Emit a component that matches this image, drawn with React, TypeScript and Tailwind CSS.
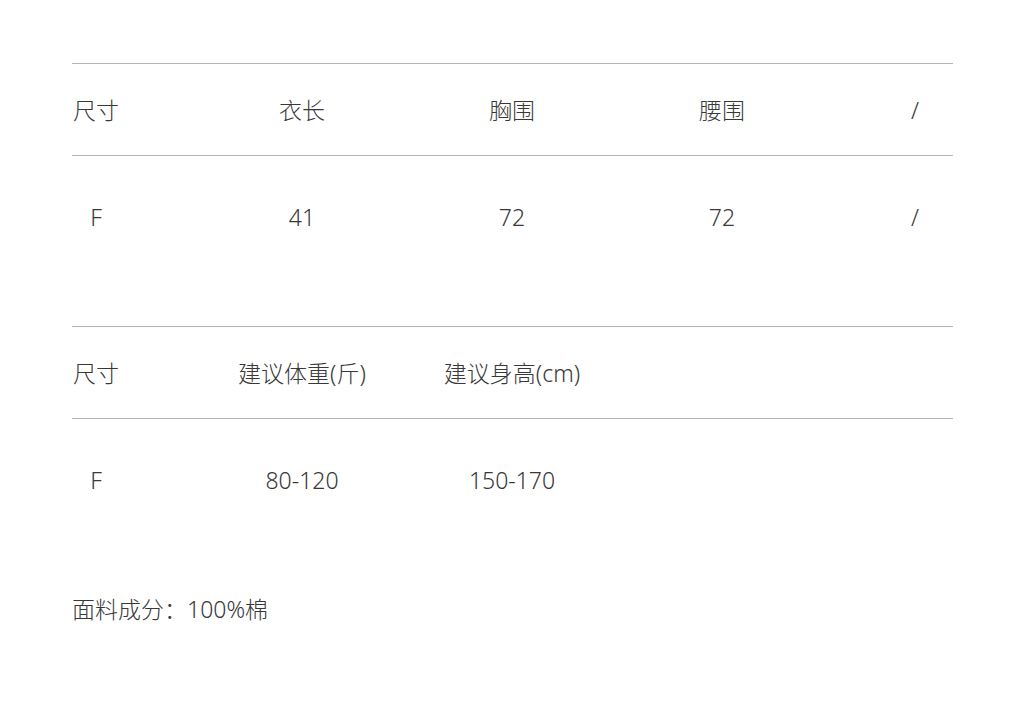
import React from 'react';

const font = { fontFamily: '"Noto Sans", "Noto Sans CJK SC", sans-serif' };

type Row = string[];

const sizeRows: { head: Row; body: Row } = {
  head: ['尺寸', '衣长', '胸围', '腰围', '/'],
  body: ['F', '41', '72', '72', '/'],
};

const fitRows: { head: Row; body: Row } = {
  head: ['尺寸', '建议体重(斤)', '建议身高(cm)', '', ''],
  body: ['F', '80-120', '150-170', '', ''],
};

function Cells({ cells }: { cells: Row }) {
  return (
    <div className="grid grid-cols-[125px_210px_210px_210px_1fr] items-center leading-[32px]">
      <div className="w-12 text-center whitespace-nowrap">{cells[0]}</div>
      <div className="text-center whitespace-nowrap">{cells[1]}</div>
      <div className="text-center whitespace-nowrap">{cells[2]}</div>
      <div className="text-center whitespace-nowrap">{cells[3]}</div>
      <div className="text-right pr-[34px]">{cells[4]}</div>
    </div>
  );
}

function SizeTable({ head, body }: { head: Row; body: Row }) {
  return (
    <div className="border-t border-[#b4b4b4]">
      <div className="h-[92px] flex flex-col justify-center border-b border-[#b4b4b4]">
        <Cells cells={head} />
      </div>
      <div className="h-[170px] pt-[45px]">
        <Cells cells={body} />
      </div>
    </div>
  );
}

export default function App() {
  return (
    <div className="w-[1024px] h-[712px] bg-white text-[#383838] text-[23px] font-light" style={font}>
      <div className="ml-[72px] w-[881px] pt-[63px]">
        <SizeTable head={sizeRows.head} body={sizeRows.body} />
        <SizeTable head={fitRows.head} body={fitRows.body} />
        <p className="mt-[4px] leading-[32px]">面料成分：100%棉</p>
      </div>
    </div>
  );
}
